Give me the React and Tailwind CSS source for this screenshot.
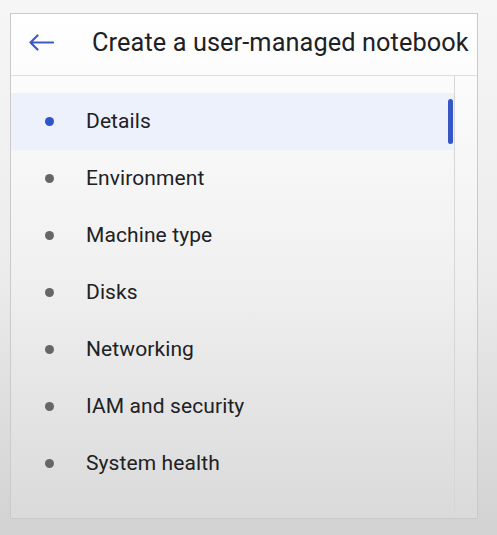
import React from "react";

const steps = [
  "Details",
  "Environment",
  "Machine type",
  "Disks",
  "Networking",
  "IAM and security",
  "System health",
];

export default function App() {
  return (
    <div
      className="w-[497px] h-[535px] bg-gradient-to-b from-[#f6f6f6] via-[#ececec] to-[#d2d2d2] pt-[13px] pl-[10px]"
      style={{ fontFamily: "Roboto, 'Noto Sans', sans-serif" }}
    >
      <div className="w-[468px] h-[506px] border border-[#cacaca] bg-gradient-to-b from-white via-[#f1f1f1] to-[#dadada] flex flex-col">
        <div className="h-[62px] shrink-0 border-b border-[#dedede] flex items-center pl-[17px]">
          <svg width="26" height="17" viewBox="0 0 26 17" fill="none" className="text-[#3c5cc4] mt-[-4px]">
            <path
              d="M25 8.5H2.5M9.5 1.5L2.5 8.5L9.5 15.5"
              stroke="currentColor"
              strokeWidth="2.2"
              strokeLinecap="round"
              strokeLinejoin="round"
            />
          </svg>
          <h1 className="ml-[38px] text-[25.3px] text-[#202124] whitespace-nowrap tracking-[0.1px] mt-[-4px]">
            Create a user-managed notebook
          </h1>
        </div>
        <div className="flex flex-1">
          <div className="w-[444px] border-r border-[#d6d6d6] pt-[17px] mb-[4px]">
            {steps.map((s, i) => (
              <div
                key={s}
                className={`relative h-[57px] flex items-center ${i === 0 ? "bg-[#edf1fc]" : ""}`}
              >
                <span
                  className={`ml-[34px] w-[9px] h-[9px] rounded-full ${i === 0 ? "bg-[#2f54c9]" : "bg-[#666666]"}`}
                />
                <span className="ml-[32px] text-[21px] text-[#202124] tracking-[0.1px]">{s}</span>
                {i === 0 && (
                  <span className="absolute right-[1px] top-[6px] w-[5px] h-[45px] rounded-full bg-[#3556c4]" />
                )}
              </div>
            ))}
          </div>
        </div>
      </div>
    </div>
  );
}
